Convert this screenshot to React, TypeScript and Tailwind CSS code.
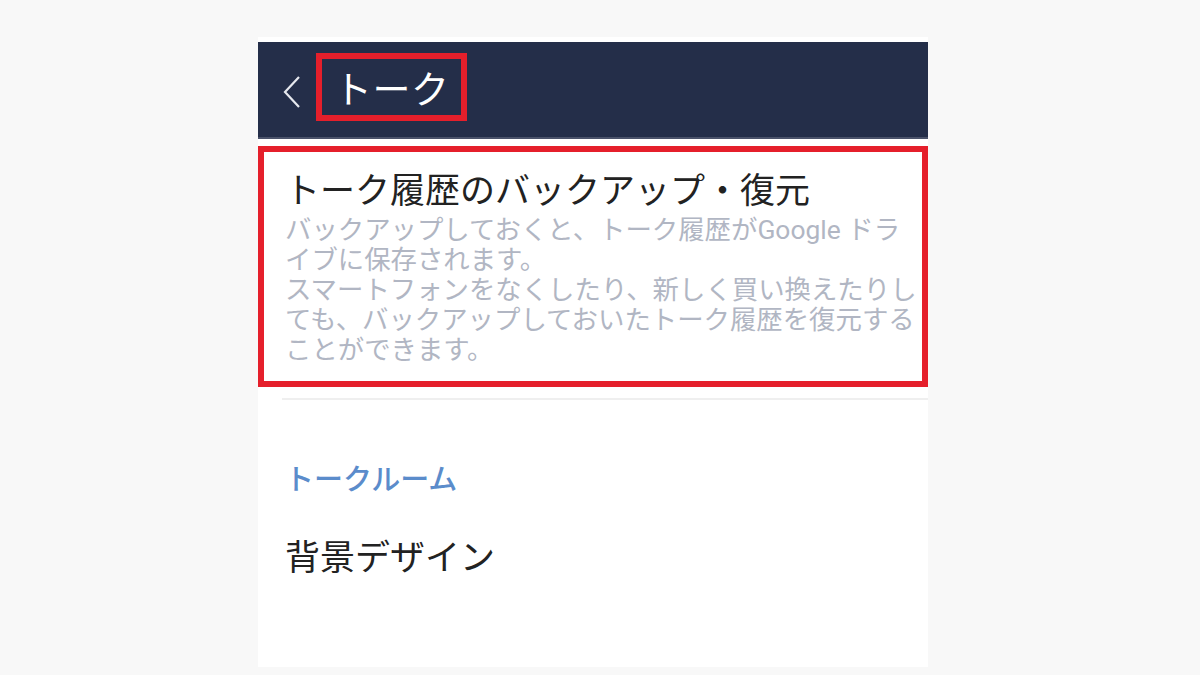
const jp = { fontFamily: '"Noto Sans CJK JP", "Noto Sans", sans-serif' };
const desc = { fontFamily: 'Roboto, "Noto Sans CJK JP", sans-serif' };

const descLines = [
  "バックアップしておくと、トーク履歴がGoogle ドラ",
  "イブに保存されます。",
  "スマートフォンをなくしたり、新しく買い換えたりし",
  "ても、バックアップしておいたトーク履歴を復元する",
  "ことができます。",
];

const App = () => (
  <div className="min-h-screen bg-[#f8f8f8] flex justify-center pt-[37px] pr-[14px]" style={jp}>
    <div className="w-[670px] h-[630px] bg-white pt-[5px] flex flex-col">
      {/* Header */}
      <div className="h-[97px] bg-[#242e49] border-b-2 border-[#4a526a] flex items-center pl-[24px]">
        <svg width="20" height="34" viewBox="0 0 20 34" className="mt-[4px]">
          <path d="M17 2 L3 17 L17 32" fill="none" stroke="#e6e8ee" strokeWidth="2.2" />
        </svg>
        <div className="ml-[14px] mt-[-6px] h-[68px] w-[151px] border-[6px] border-[#e51f2b] flex items-center pl-[12px]">
          <span className="text-[38px] leading-none text-white tracking-[0.5px]">トーク</span>
        </div>
      </div>

      {/* Backup item */}
      <div className="mt-[7px] h-[241px] border-[6px] border-[#e51f2b] pl-[21px] pt-[14px]">
        <div className="text-[35px] leading-[44px] text-[#222]">トーク履歴のバックアップ・復元</div>
        <div className="text-[26.4px] leading-[30px] text-[#b1b6c3] mt-[5px]" style={desc}>
          {descLines.map((l) => (
            <div key={l} className="whitespace-nowrap">{l}</div>
          ))}
        </div>
      </div>

      <div className="ml-[24px] mt-[11px] h-[2px] bg-[#efefef]" />

      {/* Talk room section */}
      <div className="pl-[27px] mt-[63px] text-[29px] leading-none font-medium text-[#5b8ccb]">トークルーム</div>
      <div className="pl-[27px] mt-[45px] text-[35px] leading-none text-[#222]">背景デザイン</div>
    </div>
  </div>
);

export default App;
